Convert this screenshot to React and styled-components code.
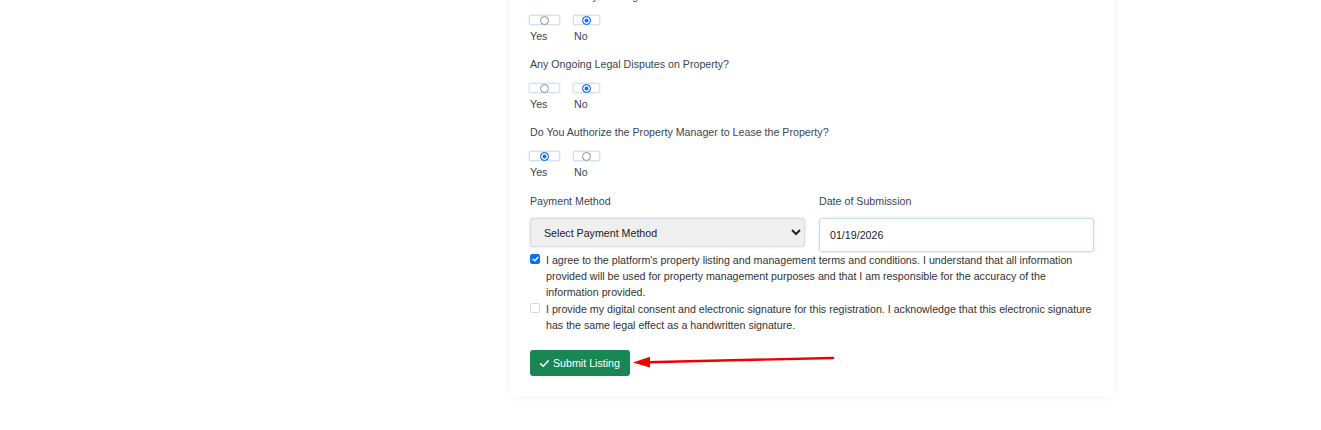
import React from "react";
import styled, { createGlobalStyle } from "styled-components";

const Global = createGlobalStyle`
  html, body { margin: 0; padding: 0; background: #ffffff; }
  body { font-family: "Liberation Sans", Arial, sans-serif; overflow: hidden; }
  * { box-sizing: border-box; }
`;

const FS = "10.67px";

const Page = styled.div`
  width: 1321px;
  height: 430px;
  overflow: hidden;
  padding-left: 510px;
`;

const Card = styled.div`
  width: 604px;
  margin-top: -12px;
  background: #fff;
  border-radius: 0 0 6px 6px;
  box-shadow: 0 0 10px rgba(0, 0, 0, 0.06);
  padding: 0 20px 20px 20px;
  display: flex;
  flex-direction: column;
`;

const Group = styled.div`
  display: flex;
  flex-direction: column;
  margin-bottom: ${(p) => p.$mb ?? 12}px;
`;

const Question = styled.div`
  font-size: ${FS};
  line-height: 16px;
  color: #3a4556;
  margin-bottom: 11px;
`;

const Options = styled.div`
  display: flex;
  gap: 14px;
`;

const Option = styled.label`
  display: flex;
  flex-direction: column;
  align-items: flex-start;
`;

const RadioBox = styled.span`
  width: ${(p) => p.$w}px;
  height: 10px;
  margin-left: -1px;
  border: 1px solid #cfe0f7;
  border-radius: 2px;
  background: #fff;
  box-shadow: 0 0 2px rgba(13, 110, 253, 0.25);
  display: flex;
  align-items: center;
  justify-content: center;
`;

const Dot = styled.span`
  width: 9px;
  height: 9px;
  border-radius: 50%;
  border: 1px solid ${(p) => (p.$on ? "#0d6efd" : "#8d8d8d")};
  background: ${(p) => (p.$on ? "#0d6efd" : "#fff")};
  box-shadow: ${(p) => (p.$on ? "inset 0 0 0 1.5px #fff" : "none")};
`;

const OptText = styled.span`
  font-size: ${FS};
  line-height: 16px;
  color: #3a4556;
  margin-top: 3px;
`;

const Grid = styled.div`
  display: grid;
  grid-template-columns: 1fr 1fr;
  column-gap: 14px;
  align-items: start;
`;

const Field = styled.div`
  display: flex;
  flex-direction: column;
`;

const FieldLabel = styled.div`
  font-size: ${FS};
  line-height: 16px;
  color: #3a4556;
  margin-bottom: 9px;
`;

const Select = styled.select`
  width: 100%;
  height: 29px;
  font-family: "Liberation Sans", Arial, sans-serif;
  font-size: ${FS};
  color: #222;
  background-color: #efefef;
  border: 1px solid #d3dbe5;
  border-radius: 3px;
  box-shadow: 0 0 3px rgba(13, 110, 253, 0.18);
  padding: 0 6px 0 9px;
  outline: none;
`;

const Input = styled.input`
  width: 100%;
  height: 34px;
  font-family: "Liberation Sans", Arial, sans-serif;
  font-size: ${FS};
  color: #222;
  background: #fff;
  border: 1px solid #cbd9e8;
  border-radius: 3px;
  box-shadow: 0 0 3px rgba(13, 110, 253, 0.2);
  padding: 0 10px;
  outline: none;
`;

const Consent = styled.label`
  display: flex;
  align-items: flex-start;
  gap: 6px;
  margin-top: ${(p) => p.$mt ?? 0}px;
`;

const Check = styled.span`
  flex: 0 0 10px;
  width: 10px;
  height: 10px;
  margin-top: 2px;
  border-radius: 2px;
  border: 1px solid ${(p) => (p.$on ? "#0d6efd" : "#d4d7db")};
  background: ${(p) => (p.$on ? "#0d6efd" : "#fff")};
  display: flex;
  align-items: center;
  justify-content: center;
`;

const ConsentText = styled.span`
  font-size: ${FS};
  line-height: 16px;
  color: #333;
`;

const Actions = styled.div`
  display: flex;
  align-items: center;
  margin-top: 17px;
`;

const Button = styled.button`
  display: inline-flex;
  align-items: center;
  gap: 3px;
  height: 26px;
  padding: 0 10px 0 9px;
  background: #198754;
  color: #fff;
  border: none;
  border-radius: 3px;
  font-family: "Liberation Sans", Arial, sans-serif;
  font-size: ${FS};
  cursor: pointer;
`;

const Arrow = styled.svg`
  margin-left: 3px;
  margin-top: -3px;
  display: block;
`;

const questions = [
  { q: "Are There Any Existing Tenants?", v: "no" },
  { q: "Any Ongoing Legal Disputes on Property?", v: "no" },
  { q: "Do You Authorize the Property Manager to Lease the Property?", v: "yes" },
];

export default function App() {
  return (
    <Page>
      <Global />
      <Card>
        {questions.map((item, i) => (
          <Group key={i} $mb={i === questions.length - 1 ? 13 : 12}>
            <Question>{item.q}</Question>
            <Options>
              <Option>
                <RadioBox $w={31}>
                  <Dot $on={item.v === "yes"} />
                </RadioBox>
                <OptText>Yes</OptText>
              </Option>
              <Option>
                <RadioBox $w={27}>
                  <Dot $on={item.v === "no"} />
                </RadioBox>
                <OptText>No</OptText>
              </Option>
            </Options>
          </Group>
        ))}
        <Grid>
          <Field>
            <FieldLabel>Payment Method</FieldLabel>
            <Select defaultValue="">
              <option value="">Select Payment Method</option>
              <option value="bank">Bank Transfer</option>
              <option value="card">Credit Card</option>
            </Select>
          </Field>
          <Field>
            <FieldLabel>Date of Submission</FieldLabel>
            <Input type="text" defaultValue="01/19/2026" readOnly />
          </Field>
        </Grid>
        <Consent>
          <Check $on>
            <svg width="7" height="6" viewBox="0 0 7 6">
              <path d="M1 3.2 L2.8 4.8 L6 1.2" fill="none" stroke="#fff" strokeWidth="1.3" strokeLinecap="round" strokeLinejoin="round" />
            </svg>
          </Check>
          <ConsentText>
            I agree to the platform's property listing and management terms and conditions. I understand that all information provided will be used for property management purposes and that I am responsible for the accuracy of the information provided.
          </ConsentText>
        </Consent>
        <Consent $mt={1}>
          <Check />
          <ConsentText>
            I provide my digital consent and electronic signature for this registration. I acknowledge that this electronic signature has the same legal effect as a handwritten signature.
          </ConsentText>
        </Consent>
        <Actions>
          <Button type="button">
            <svg width="11" height="11" viewBox="0 0 16 16">
              <path d="M2.5 8.5 L6 12 L13.5 4" fill="none" stroke="#fff" strokeWidth="2.2" strokeLinecap="round" strokeLinejoin="round" />
            </svg>
            Submit Listing
          </Button>
          <Arrow width="202" height="14" viewBox="0 0 202 14">
            <line x1="14" y1="7.2" x2="200" y2="3" stroke="#ee0000" strokeWidth="2.4" strokeLinecap="round" />
            <polygon points="0,7.5 17,1.8 17,12.6" fill="#ee0000" />
          </Arrow>
        </Actions>
      </Card>
    </Page>
  );
}
